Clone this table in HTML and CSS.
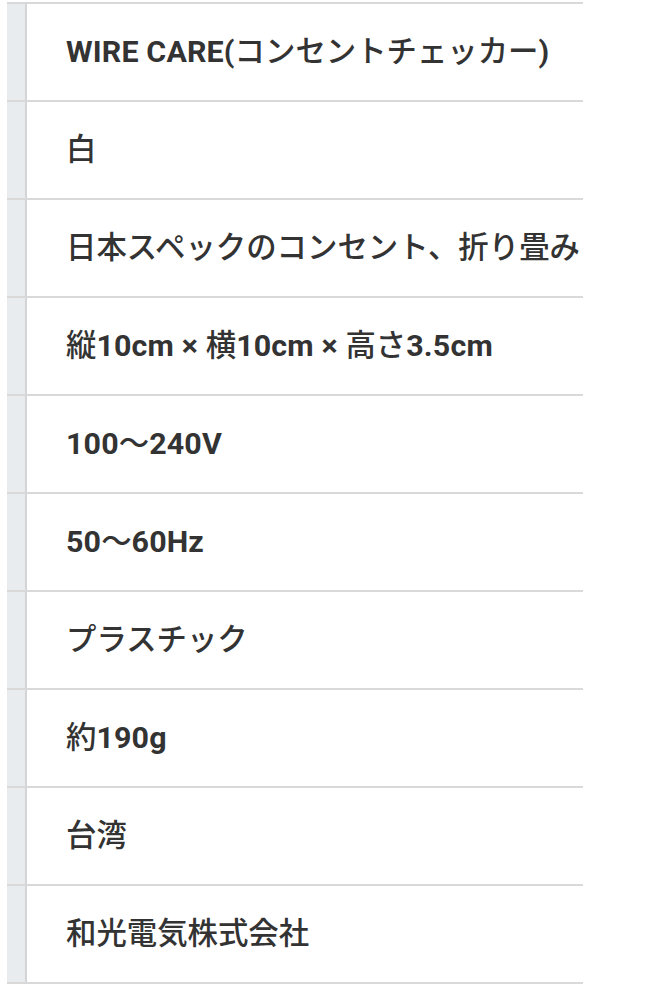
FILE: index.html
```html
<!DOCTYPE html>
<html lang="ja">
<head>
<meta charset="utf-8">
<link rel="stylesheet" href="styles.css">
</head>
<body>
<div class="wrap">
<table class="spec">
<tbody>
<tr><th></th><td><span class="en">WIRE CARE(</span>コンセントチェッカー<span class="en">)</span></td></tr>
<tr><th></th><td>白</td></tr>
<tr><th></th><td>日本スペックのコンセント、折り畳み</td></tr>
<tr><th></th><td>縦<span class="en">10cm × </span>横<span class="en">10cm × </span>高さ<span class="en">3.5cm</span></td></tr>
<tr><th></th><td><span class="en">100</span>〜<span class="en">240V</span></td></tr>
<tr><th></th><td><span class="en">50</span>〜<span class="en">60Hz</span></td></tr>
<tr><th></th><td>プラスチック</td></tr>
<tr><th></th><td>約<span class="en">190g</span></td></tr>
<tr><th></th><td>台湾</td></tr>
<tr><th></th><td>和光電気株式会社</td></tr>
</tbody>
</table>
</div>
</body>
</html>
```
FILE: styles.css
```css
html, body {
  margin: 0;
  padding: 0;
  background: #ffffff;
}
.wrap {
  margin: 2px 0 0 7px;
  width: 576px;
  overflow: hidden;
}
.spec {
  border-collapse: collapse;
  width: 576px;
  table-layout: fixed;
  font-family: Roboto, "Noto Sans CJK JP", sans-serif;
  font-weight: 500;
  font-size: 30.4px;
  color: #333333;
}
.spec tr {
  height: 98px;
}
.spec th {
  width: 18px;
  padding: 0;
  background: #e9ecef;
  border-top: 2px solid #d9d9d9;
  border-bottom: 2px solid #d9d9d9;
  border-right: 2px solid #d3d6d9;
}
.spec td {
  padding: 0 0 6px 39px;
  white-space: nowrap;
  overflow: hidden;
  border-top: 2px solid #d9d9d9;
  border-bottom: 2px solid #d9d9d9;
  vertical-align: middle;
}
.en {
  font-weight: 700;
  letter-spacing: 0.15px;
}
```
